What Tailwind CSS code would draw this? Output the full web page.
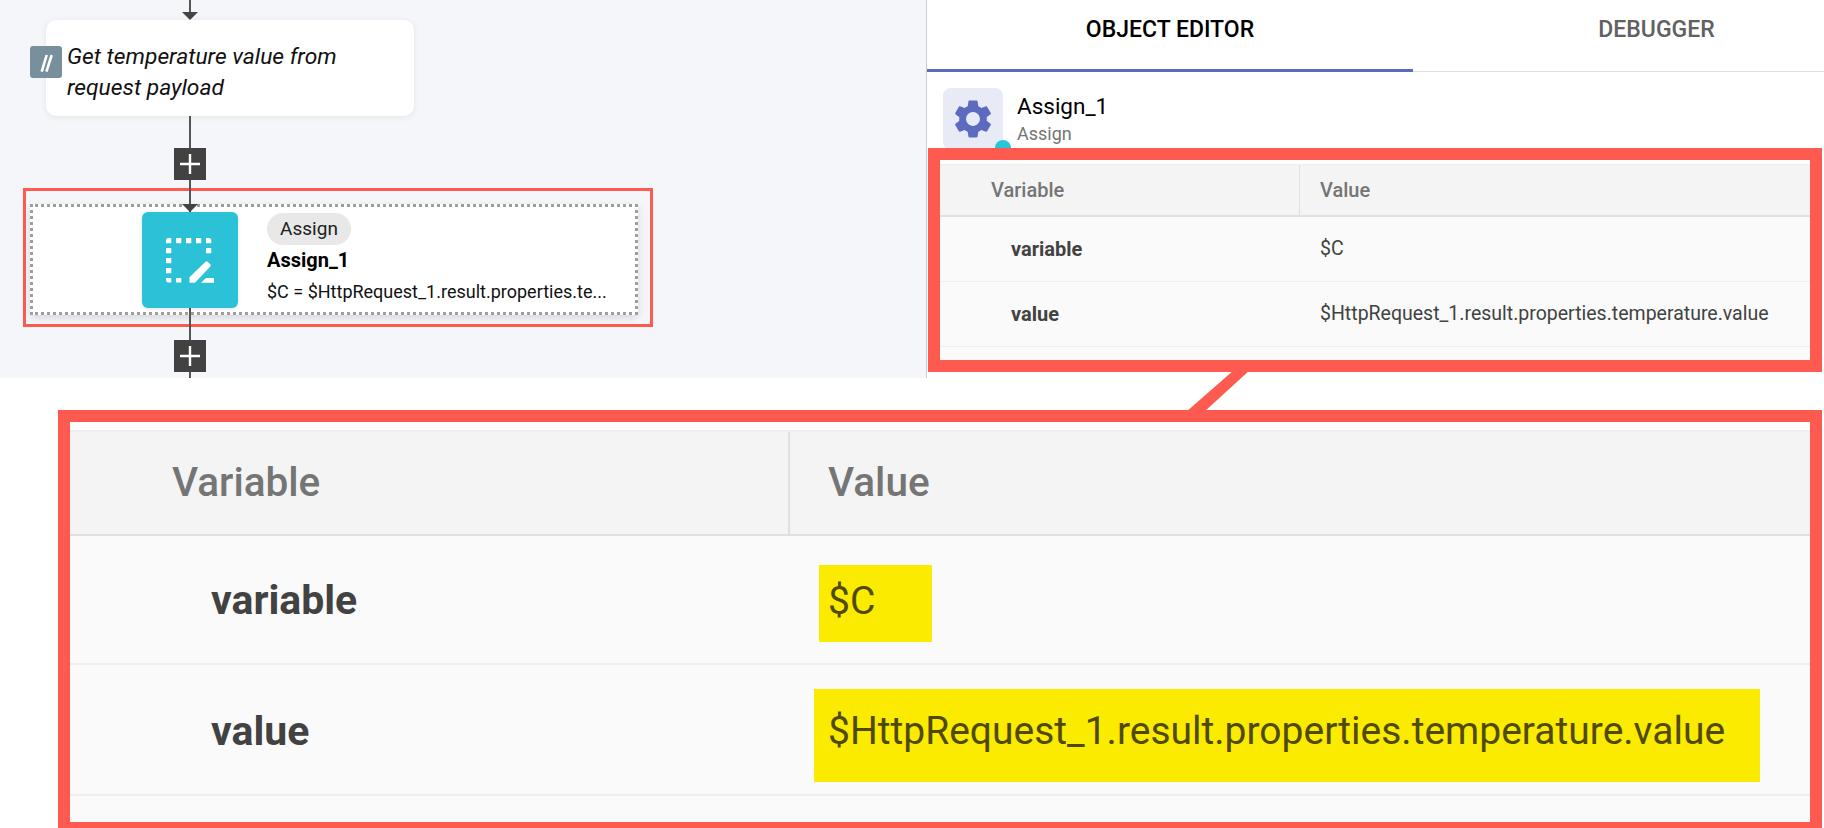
<!DOCTYPE html>
<html>
<head>
    <title>Assign step</title>
    <script src="https://cdn.jsdelivr.net/npm/@tailwindcss/browser@4"></script>
</head>

<body class="bg-white font-[Roboto,sans-serif] overflow-hidden">
    <div class="relative w-[1824px] h-[828px] overflow-hidden">

        <!-- top row: flow canvas + editor panel -->
        <div class="flex h-[378px]">
            <div class="relative w-[926px] h-full bg-[#f5f6fa] pl-[46px] pt-[20px] flex flex-col">
                <!-- connector -->
                <div class="absolute left-[189px] top-0 w-[2px] h-[14px] bg-[#555555]"></div>
                <svg class="absolute left-[182px] top-[12px]" width="16" height="8"><path d="M0 0h16l-8 8z" fill="#444444"/></svg>
                <div class="absolute left-[189px] top-[116px] w-[2px] h-[262px] bg-[#555555] z-10"></div>

                <div class="relative w-[368px] h-[96px] bg-white rounded-[10px] shadow-[0_1px_6px_rgba(0,0,0,0.08)] pl-[21px] pt-[21px] text-[22.8px] leading-[31px] italic text-[#111111]">
                    <div class="absolute left-[-16px] top-[26px] w-[32px] h-[32px] rounded-[3px] bg-[#78909c]">
                        <svg width="32" height="32"><path d="M11.7 25.7 16.7 9M16.4 25.7 21.7 9" stroke="#ffffff" stroke-width="2.6" fill="none"/></svg>
                    </div>
                    Get temperature value from<br>request payload
                </div>

                <div class="relative z-20 ml-[128px] mt-[32px] w-[32px] h-[32px] bg-[#424242] flex items-center justify-center">
                    <svg width="24" height="24"><path d="M12 2v20M2 12h20" stroke="#ffffff" stroke-width="2.4"/></svg>
                </div>

                <!-- selected node with annotation frame -->
                <div class="-ml-[23px] mt-[8px] w-[630px] h-[139px] border-[3px] border-[#ff5a4f] pl-[4px] pt-[13px]">
                    <div class="relative w-[608px] h-[111px] bg-white border-[3px] border-dotted border-[#9e9e9e] shadow-[0_3px_8px_rgba(0,0,0,0.12)] pl-[109px] pt-[5px] flex">
                        <svg class="absolute left-[149px] top-[-3px] z-20" width="16" height="8"><path d="M0 0h16l-8 8z" fill="#444444"/></svg>
                        <div class="relative z-20 w-[96px] h-[96px] shrink-0 rounded-[6px] bg-[#2bc1d6] shadow-[0_1px_4px_rgba(0,0,0,0.12)] pl-[24px] pt-[26px]">
                            <svg width="48" height="46" fill="#ffffff">
                                <path d="M0 5.3V2.5A2.5 2.5 0 0 1 2.5 0h2.8v5.3zM10 0h5.3v5.3H10zM20 0h5.3v5.3H20zM30 0h5.3v5.3H30zM40 0h2.8a2.5 2.5 0 0 1 2.5 2.5v2.8H40zM0 10h5.3v5.3H0zM0 20h5.3v5.3H0zM0 30h5.3v5.3H0zM0 40h5.3v4.5H2.5A2.5 2.5 0 0 1 0 42zM10 40h5.3v4.5H10zM40 10h5.3v5.3H40z"/>
                                <path d="M23.5 44.7v-5.4l16-15.6a1.6 1.6 0 0 1 2.2 0l2.6 2.6a1.6 1.6 0 0 1 0 2.2L29 44.7zM35 44.7l5-4.8h8v4.8z"/>
                            </svg>
                        </div>
                        <div class="ml-[29px] flex flex-col items-start">
                            <div class="mt-[1px] h-[32px] w-[84px] rounded-full bg-[#e8e8e8] text-[19px] leading-[32px] text-center text-[#212121]">Assign</div>
                            <div class="mt-[3px] text-[20px] leading-[24px] font-bold text-black">Assign_1</div>
                            <div class="mt-[8px] text-[18px] leading-[24px] text-[#111111]">$C = $HttpRequest_1.result.properties.te...</div>
                        </div>
                    </div>
                </div>

                <div class="relative z-20 ml-[128px] mt-[13px] w-[32px] h-[32px] bg-[#424242] flex items-center justify-center">
                    <svg width="24" height="24"><path d="M12 2v20M2 12h20" stroke="#ffffff" stroke-width="2.4"/></svg>
                </div>
            </div>

            <div class="flex-1 border-l border-[#cccccc] flex flex-col">
                <div class="grid grid-cols-[486px_1fr] h-[72px] border-b border-[#e0e0e0] text-[23px] font-medium">
                    <div class="h-[72px] border-b-[3px] border-[#5c6bc0] text-center leading-[60px] text-black">OBJECT EDITOR</div>
                    <div class="text-center leading-[60px] text-[#616161] pl-[76px]">DEBUGGER</div>
                </div>

                <div class="flex h-[76px] pl-[16px] pt-[16px]">
                    <div class="relative w-[60px] h-[62px] shrink-0 rounded-[8px] bg-[#e8eaf6] flex items-center justify-center">
                        <svg width="46" height="46" viewBox="0 0 24 24" fill="#5c6bc0"><path d="M19.14 12.94c.04-.3.06-.61.06-.94 0-.32-.02-.64-.07-.94l2.03-1.58c.18-.14.23-.41.12-.61l-1.92-3.32c-.12-.22-.37-.29-.59-.22l-2.39.96c-.5-.38-1.03-.7-1.62-.94l-.36-2.54c-.04-.24-.24-.41-.48-.41h-3.84c-.24 0-.43.17-.47.41l-.36 2.54c-.59.24-1.13.57-1.62.94l-2.39-.96c-.22-.08-.47 0-.59.22L2.74 8.87c-.12.21-.08.47.12.61l2.03 1.58c-.05.3-.09.63-.09.94s.02.64.07.94l-2.03 1.58c-.18.14-.23.41-.12.61l1.92 3.32c.12.22.37.29.59.22l2.39-.96c.5.38 1.03.7 1.62.94l.36 2.54c.05.24.24.41.48.41h3.84c.24 0 .44-.17.47-.41l.36-2.54c.59-.24 1.13-.56 1.62-.94l2.39.96c.22.08.47 0 .59-.22l1.92-3.32c.12-.22.07-.47-.12-.61l-2.01-1.58zM12 15.6c-1.98 0-3.6-1.62-3.6-3.6s1.62-3.6 3.6-3.6 3.6 1.62 3.6 3.6-1.62 3.6-3.6 3.6z"/></svg>
                        <div class="absolute left-[52px] top-[52px] w-[16px] h-[16px] rounded-full bg-[#26c6da]"></div>
                    </div>
                    <div class="ml-[14px]">
                        <div class="text-[22.5px] leading-[26px] mt-[5px] text-black">Assign_1</div>
                        <div class="text-[18px] leading-[22px] mt-[4px] text-[#757575]">Assign</div>
                    </div>
                </div>

                <!-- small table, framed -->
                <div class="relative z-10 ml-[1px] mr-[2px] h-[224px] border-[12px] border-[#ff5a4f] bg-white">
                    <div class="h-[5px] border-b border-[#eeeeee]"></div>
                    <div class="grid grid-cols-[360px_1fr] h-[52px] bg-[#f4f4f4] border-b-2 border-[#e0e0e0] text-[20px] font-medium text-[#757575] leading-[50px]">
                        <div class="pl-[51px] border-r border-[#e0e0e0]">Variable</div>
                        <div class="pl-[20px]">Value</div>
                    </div>
                    <div class="bg-[#fafafa] h-[143px] text-[#424242]">
                        <div class="grid grid-cols-[360px_1fr] h-[65px] border-b border-[#eeeeee] leading-[64px]">
                            <div class="pl-[71px] font-bold text-[20px]">variable</div>
                            <div class="pl-[20px] text-[19.5px]">$C</div>
                        </div>
                        <div class="grid grid-cols-[360px_1fr] h-[65px] border-b border-[#eeeeee] leading-[64px]">
                            <div class="pl-[71px] font-bold text-[20px]">value</div>
                            <div class="pl-[20px] text-[19.5px]">$HttpRequest_1.result.properties.temperature.value</div>
                        </div>
                    </div>
                </div>
            </div>
        </div>

        <!-- callout leader -->
        <svg class="absolute left-[1181px] top-[370px]" width="75" height="44"><path d="M53 0h16L23 42H5z" fill="#ff5a4f"/></svg>

        <!-- enlarged table -->
        <div class="ml-[58px] mr-[2px] mt-[32px] h-[424px] border-[12px] border-[#ff5a4f] bg-white">
            <div class="h-[10px] border-b-2 border-[#eeeeee]"></div>
            <div class="grid grid-cols-[720px_1fr] h-[104px] bg-[#f4f4f4] border-b-2 border-[#e0e0e0] text-[40.5px] font-medium text-[#757575] leading-[100px]">
                <div class="pl-[102px] border-r-2 border-[#e0e0e0]">Variable</div>
                <div class="pl-[38px]">Value</div>
            </div>
            <div class="bg-[#fafafa] h-[286px] text-[#424242]">
                <div class="grid grid-cols-[720px_1fr] h-[129px] border-b-2 border-[#eeeeee]">
                    <div class="pl-[141px] pt-[40px] leading-[48px] font-bold text-[41px]">variable</div>
                    <div class="pl-[29px] pt-[29px]">
                        <div class="w-[113px] h-[77px] bg-[#fbeb00] pl-[9px] leading-[72px] text-[39px] text-[#4f4a00]">$C</div>
                    </div>
                </div>
                <div class="grid grid-cols-[720px_1fr] h-[131px] border-b-2 border-[#eeeeee]">
                    <div class="pl-[141px] pt-[42px] leading-[48px] font-bold text-[41px]">value</div>
                    <div class="pl-[24px] pt-[24px]">
                        <div class="w-[946px] h-[93px] bg-[#fbeb00] pl-[14px] leading-[84px] text-[39px] text-[#4f4a00]">$HttpRequest_1.result.properties.temperature.value</div>
                    </div>
                </div>
            </div>
        </div>
    </div>
</body>

</html>
